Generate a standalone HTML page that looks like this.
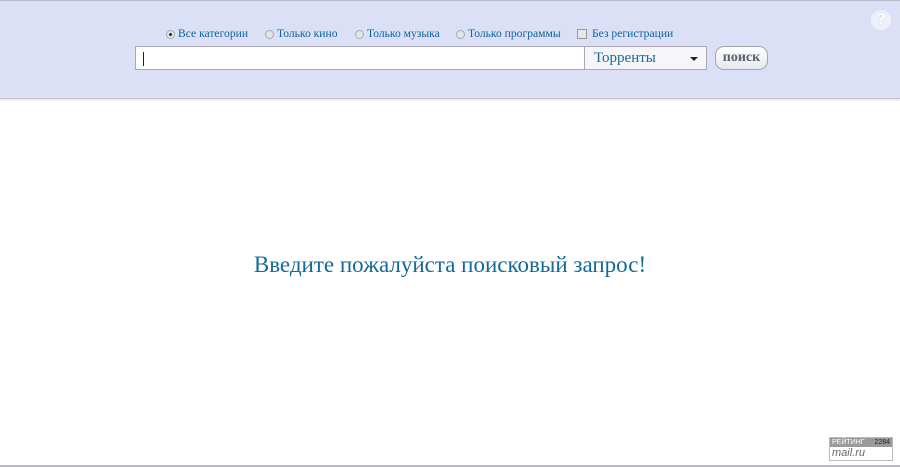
<!DOCTYPE html>
<html><head><meta charset="utf-8"><style>
*{margin:0;padding:0;box-sizing:border-box}
body{width:900px;height:467px;background:#fff;position:relative;overflow:hidden;font-family:"Liberation Serif",serif}
.hdr{position:absolute;left:0;top:0;width:900px;height:99px;background:#dbe0f7;border-top:1px solid #b8bccc;border-bottom:1px solid #c4c4cc;box-shadow:0 1px 2px #ddd}
.opt{position:absolute;top:26px;font-size:11.6px;color:#0b64a0;white-space:nowrap}
.rb{position:absolute;top:29px;width:9px;height:9px;border-radius:50%;background:#e4e4e4;border:1px solid #aaa}
.rb.on::after{content:"";position:absolute;left:2px;top:2px;width:3px;height:3px;border-radius:50%;background:#225}
.cb{position:absolute;top:28px;left:577px;width:10px;height:10px;border:1px solid #999;background:#e8e8e8}
.inp{position:absolute;left:135px;top:45px;width:450px;height:24px;background:#fff;border:1px solid #a8a8b8}
.inp::before{content:"";position:absolute;left:7px;top:5px;width:1px;height:14px;background:#222}
.sel{position:absolute;left:584px;top:45px;width:123px;height:24px;background:#f6f6f8;border:1px solid #a8a8b8;font-size:15px;color:#1a6a96;padding:3px 0 0 9px}
.sel::after{content:"";position:absolute;right:8px;top:10px;border-left:4px solid transparent;border-right:4px solid transparent;border-top:4px solid #222}
.btn{position:absolute;left:715px;top:45px;width:53px;height:24px;border:1px solid #9aa;border-radius:9px;background:linear-gradient(#fff,#e6e8ee);font-size:14px;font-weight:bold;color:#5a6070;text-align:center;line-height:21px}
.help{position:absolute;left:871px;top:9px;width:20px;height:20px;border-radius:50%;background:#eef0fb;color:#fff;font:bold 16px "Liberation Sans",sans-serif;text-align:center;line-height:20px;text-shadow:0 0 2px #ccd}
.msg{position:absolute;left:0;width:900px;top:252px;text-align:center;font-size:23px;color:#136a9a}
.cnt{position:absolute;left:829px;top:437px;width:64px;height:24px;border:1px solid #bbb;background:#fff}
.cnt .t{height:9px;background:#9a9a9a;color:#fff;font:7px "Liberation Sans",sans-serif;padding-left:2px;line-height:9px}
.cnt .b{font:italic 11px "Liberation Sans",sans-serif;color:#666;padding-left:2px}
.line{position:absolute;left:0;top:465px;width:900px;height:2px;background:#b8b8c8}
</style></head><body>
<div class="hdr">
<div class="help">?</div>
<div class="rb on" style="left:166px"></div><div class="opt" style="left:178px">Все категории</div>
<div class="rb" style="left:265px"></div><div class="opt" style="left:277px">Только кино</div>
<div class="rb" style="left:355px"></div><div class="opt" style="left:367px">Только музыка</div>
<div class="rb" style="left:456px"></div><div class="opt" style="left:468px">Только программы</div>
<div class="cb"></div><div class="opt" style="left:592px">Без регистрации</div>
<div class="inp"></div>
<div class="sel">Торренты</div>
<div class="btn">поиск</div>
</div>
<div class="msg">Введите пожалуйста поисковый запрос!</div>
<div class="cnt"><div class="t">РЕЙТИНГ <span style="float:right;color:#222;padding-right:2px">2284</span></div><div class="b">mail.ru</div></div>
<div class="line"></div>
</body></html>
